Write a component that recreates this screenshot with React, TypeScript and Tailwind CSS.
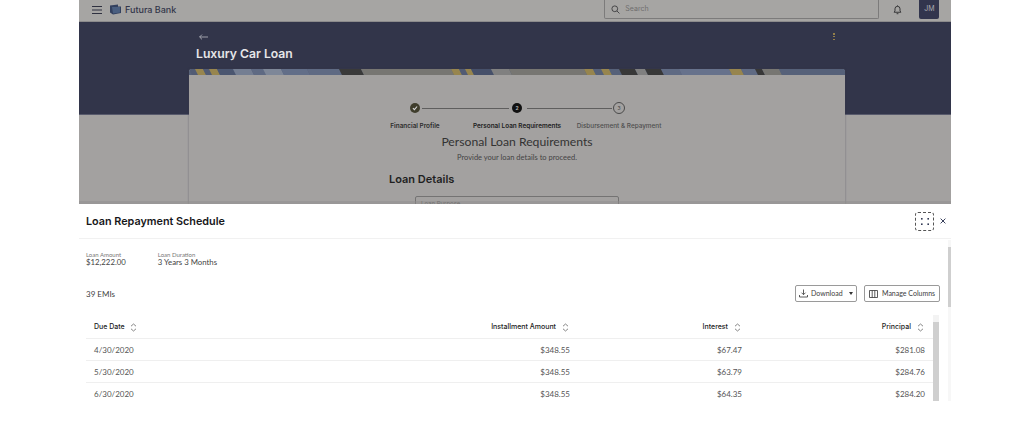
import React from "react";

const rows = [
  ["4/30/2020", "$348.55", "$67.47", "$281.08"],
  ["5/30/2020", "$348.55", "$63.79", "$284.76"],
  ["6/30/2020", "$348.55", "$64.35", "$284.20"],
];

function Sort() {
  return (
    <svg width="7" height="9" viewBox="0 0 7 9" fill="none" stroke="#666" strokeWidth="0.8" className="shrink-0">
      <path d="M1 3.2 3.5 1 6 3.2M1 5.8 3.5 8 6 5.8" />
    </svg>
  );
}

function Strip() {
  const segs: [number, number, string][] = [
    [0, 6, "#515b74"], [6, 14, "#97854e"], [14, 20, "#515b74"], [20, 28, "#97854e"], [28, 44, "#4b5670"],
    [44, 62, "#747e92"], [62, 74, "#5f6a83"], [74, 92, "#7e8798"], [92, 118, "#626e88"], [118, 150, "#5f6a83"],
    [150, 172, "#3a3a3a"], [172, 262, "#777672"], [262, 270, "#97854e"], [270, 276, "#515b74"], [276, 282, "#97854e"],
    [282, 302, "#46506a"], [302, 320, "#808080"], [320, 395, "#777672"], [395, 404, "#97854e"], [404, 412, "#566179"],
    [412, 420, "#97854e"], [420, 430, "#566179"], [430, 446, "#383838"], [446, 456, "#808080"], [456, 472, "#383838"],
    [472, 490, "#5f6a83"], [490, 540, "#67728c"], [540, 552, "#97854e"], [552, 566, "#5f6a83"], [566, 573, "#383838"],
    [573, 590, "#777672"], [590, 656, "#566179"],
  ];
  return (
    <svg width="656" height="6" viewBox="0 0 656 6" preserveAspectRatio="none" className="block">
      <rect width="656" height="6" fill="#566179" />
      {segs.map(([a, b, c], i) => (
        <polygon key={i} points={`${a},0 ${b},0 ${b + 3},6 ${a + 3},6`} fill={c} />
      ))}
    </svg>
  );
}

function Step({ state, n, label, cls }: { state: string; n: string; label: string; cls: string }) {
  return (
    <div className="flex flex-col items-center w-[102px]">
      <div className="h-[12px] flex items-center justify-center">
        <div
          className={
            state === "done"
              ? "w-[10px] h-[10px] rounded-full bg-[#3f3d2c] flex items-center justify-center"
              : state === "active"
                ? "w-[10px] h-[10px] rounded-full bg-[#111111] flex items-center justify-center text-[5px] leading-none font-bold text-[#bbbbbb]"
                : "w-[12px] h-[12px] rounded-full border border-[#4a4a4a] flex items-center justify-center text-[5px] leading-none text-[#444444]"
          }
        >
          {state === "done" ? (
            <svg width="6" height="6" viewBox="0 0 8 8" fill="none" stroke="#d8d8d8" strokeWidth="1.5">
              <path d="M1.2 4.2 3.2 6.2 6.8 2" />
            </svg>
          ) : (
            n
          )}
        </div>
      </div>
      <div className={`mt-[7px] text-[6.4px] leading-[10px] whitespace-nowrap ${cls}`}>{label}</div>
    </div>
  );
}

export default function App() {
  return (
    <div className="w-[1025px] h-[436px] bg-white overflow-hidden font-['Inter',sans-serif]">
      <div className="ml-[79px] w-[872px] h-[401px] flex flex-col">
        <div className="h-[204px] overflow-hidden bg-[#a3a1a0] relative flex flex-col">
          <header className="h-[22px] shrink-0 bg-[#a6a5a3] border-b border-[#8c8b8c] flex items-center pl-[13px] pb-[2px]">
            <svg width="10" height="8" viewBox="0 0 10 8" stroke="#2f3140" strokeWidth="1">
              <path d="M0 .5h10M0 4h10M0 7.5h10" />
            </svg>
            <svg width="11" height="11" viewBox="0 0 11 11" className="ml-[8px]">
              <path d="M0 1.5 8 .5v2h3v6.5L3 10.5 0 8.5z" fill="#33415f" />
              <path d="M2 3h8v5.5L3 9.5z" fill="#4a5f80" />
            </svg>
            <span className="ml-[4px] text-[9px] font-medium text-[#33364a]">Futura Bank</span>
            <div className="ml-[428px] w-[275px] h-[19px] self-start border border-t-0 border-[#7c7b7b] rounded-b-[2px] flex items-center pl-[6px] pt-[1px]">
              <svg width="9" height="9" viewBox="0 0 10 10" fill="none" stroke="#3d3d40" strokeWidth="1">
                <circle cx="4.2" cy="4.2" r="3.2" />
                <path d="M6.6 6.6 9.4 9.4" />
              </svg>
              <span className="ml-[5px] text-[7px] text-[#6f6e6e]">Search</span>
            </div>
            <svg width="9" height="10" viewBox="0 0 10 11" fill="none" stroke="#2b2b2e" strokeWidth="1" className="ml-[14px] mt-[1px]">
              <path d="M1.3 8h7.4L7.8 6.5V4.2a2.8 2.8 0 0 0-5.6 0v2.3zM4 9.6h2M5 .4v1" />
            </svg>
            <div className="ml-[17px] w-[20px] h-[19px] self-start rounded-b-[2px] bg-[#32354d] flex items-center justify-center text-[7px] text-[#a9a9b0]">
              JM
            </div>
          </header>
          <div className="absolute left-0 right-0 top-[22px] h-[93px] bg-[#32354a] border-b border-[#585a6c]" />
          <div className="relative h-[47px] shrink-0">
            <svg width="9" height="6" viewBox="0 0 9 6" fill="none" stroke="#b9bac2" strokeWidth="0.8" className="absolute left-[120px] top-[12px]">
              <path d="M9 3H.6M3 .6.6 3 3 5.4" />
            </svg>
            <div className="absolute left-[117px] top-[23px] text-[12.2px] leading-[17px] font-semibold text-[#e6e6e8]">Luxury Car Loan</div>
            <div className="absolute left-[754px] top-[11px] w-[1.5px] h-[7px] flex flex-col justify-between">
              <span className="w-[1.5px] h-[1.5px] bg-[#94804a]" />
              <span className="w-[1.5px] h-[1.5px] bg-[#94804a]" />
              <span className="w-[1.5px] h-[1.5px] bg-[#94804a]" />
            </div>
          </div>
          <main className="relative mx-[110px] w-[656px] flex-1 bg-[#a3a1a0] rounded-t-[3px] overflow-hidden shadow-[0_0_2px_rgba(60,60,70,0.6)]">
            <Strip />
            <div className="pt-[27px] flex flex-col">
              <div className="relative w-[306px] ml-[175px] flex">
                <div className="absolute left-[58px] top-[6px] w-[87px] h-px bg-[#5f5e5e]" />
                <div className="absolute left-[163px] top-[6px] w-[85px] h-px bg-[#5f5e5e]" />
                <Step state="done" n="" label="Financial Profile" cls="font-semibold text-[#2e2e2e]" />
                <Step state="active" n="2" label="Personal Loan Requirements" cls="font-semibold text-[#222222]" />
                <Step state="todo" n="3" label="Disbursement & Repayment" cls="font-medium text-[#4e4e4e]" />
              </div>
              <div className="mt-[2px] text-center text-[12.2px] leading-[17px] text-[#333333] font-['Lato',sans-serif]">Personal Loan Requirements</div>
              <div className="mt-[2px] text-center text-[7.5px] leading-[12px] text-[#444444] font-['Lato',sans-serif]">Provide your loan details to proceed.</div>
              <div className="mt-[8px] ml-[200px] text-[11px] leading-[14px] font-semibold text-[#1f1f1f]">Loan Details</div>
              <div className="mt-[10px] ml-[226px] w-[204px] h-[20px] border border-[#747373] rounded-[2px] pl-[5px] pt-[2px] text-[6px] text-[#555555]">Loan Purpose</div>
            </div>
          </main>
          <div className="absolute left-0 right-0 bottom-0 h-[3px] bg-[#8f8e8e] opacity-50" />
        </div>

        <section className="relative flex-1 min-h-0 bg-white overflow-hidden">
          <div className="h-[35px] border-b border-[#f1f1f1] flex items-center pl-[7px] relative">
            <h2 className="pt-[3px] text-[10.8px] font-semibold text-[#17171a]">Loan Repayment Schedule</h2>
            <div className="absolute left-[836px] top-[8px] w-[19px] h-[19px] border border-dashed border-[#555555] rounded-[3px] flex items-center justify-center">
              <svg width="8" height="7" viewBox="0 0 8 7" fill="#333a55">
                <rect x="0" y="0" width="1.6" height="1.6" />
                <rect x="6.4" y="0" width="1.6" height="1.6" />
                <rect x="0" y="5.4" width="1.6" height="1.6" />
                <rect x="6.4" y="5.4" width="1.6" height="1.6" />
              </svg>
            </div>
            <svg width="6" height="6" viewBox="0 0 6 6" stroke="#39405c" strokeWidth="1" className="absolute left-[861px] top-[14px]">
              <path d="M.6.6 5.4 5.4M5.4.6.6 5.4" />
            </svg>
          </div>

          <div className="flex pl-[7px] pt-[12px] gap-[32px] font-['Lato',sans-serif]">
            <div>
              <div className="text-[6px] leading-[7px] text-[#777777]">Loan Amount</div>
              <div className="text-[7.8px] leading-[9px] text-[#444444]">$12,222.00</div>
            </div>
            <div>
              <div className="text-[6px] leading-[7px] text-[#777777]">Loan Duration</div>
              <div className="text-[7.8px] leading-[9px] text-[#444444]">3 Years 3 Months</div>
            </div>
          </div>

          <div className="mt-[18px] flex items-center pl-[7px] pr-[11px] h-[17px] font-['Lato',sans-serif]">
            <span className="text-[8px] text-[#444444]">39 EMIs</span>
            <div className="ml-auto flex gap-[7px] text-[7px] text-[#3c3c3c]">
              <div className="w-[62px] h-[17px] border border-[#9a9a9a] rounded-[2px] flex items-center pl-[3px]">
                <svg width="9" height="9" viewBox="0 0 9 9" fill="none" stroke="#333" strokeWidth="0.8" className="shrink-0">
                  <path d="M4.5 .5v5M2.5 3.7 4.5 5.7 6.5 3.7M.5 6v2h8V6" />
                </svg>
                <span className="ml-[3px]">Download</span>
                <span className="ml-[6px] w-0 h-0 border-x-[2.5px] border-x-transparent border-t-[3px] border-t-[#333333]" />
              </div>
              <div className="w-[76px] h-[17px] border border-[#9a9a9a] rounded-[2px] flex items-center pl-[4px]">
                <svg width="9" height="8" viewBox="0 0 9 8" fill="none" stroke="#333" strokeWidth="0.8" className="shrink-0">
                  <path d="M.5.5h8v7h-8zM3.2.5v7M5.8.5v7" />
                </svg>
                <span className="ml-[4px] whitespace-nowrap">Manage Columns</span>
              </div>
            </div>
          </div>

          <div className="mt-[9px] ml-[7px] w-[847px] text-[8px]">
            <div className="grid grid-cols-[320px_172px_172px_183px] h-[28px] pt-[5px] border-b border-[#efefef] items-center text-[7px] font-medium text-[#222222]">
              <div className="pl-[8px] flex items-center gap-[5px]">Due Date <Sort /></div>
              <div className="pr-[9px] flex items-center justify-end gap-[6px] whitespace-nowrap">Installment Amount <Sort /></div>
              <div className="pr-[9px] flex items-center justify-end gap-[6px]">Interest <Sort /></div>
              <div className="pr-[9px] flex items-center justify-end gap-[6px]">Principal <Sort /></div>
            </div>
            {rows.map((r) => (
              <div key={r[0]} className="grid grid-cols-[320px_172px_172px_183px] h-[22px] border-b border-[#efefef] items-center text-[#555555] font-['Lato',sans-serif]">
                <div className="pl-[8px]">{r[0]}</div>
                <div className="pr-[8px] text-right">{r[1]}</div>
                <div className="pr-[8px] text-right">{r[2]}</div>
                <div className="pr-[8px] text-right">{r[3]}</div>
              </div>
            ))}
          </div>

          <div className="absolute left-[854px] top-[111px] bottom-0 w-[6px] bg-[#f3f3f3]">
            <div className="mt-[7px] h-full bg-[#cfcfcf]" />
          </div>
          <div className="absolute right-0 top-[36px] bottom-0 w-[3px] bg-[#f7f7f7]">
            <div className="mt-[7px] h-[60px] bg-[#cfcfcf]" />
          </div>
        </section>
      </div>
    </div>
  );
}
